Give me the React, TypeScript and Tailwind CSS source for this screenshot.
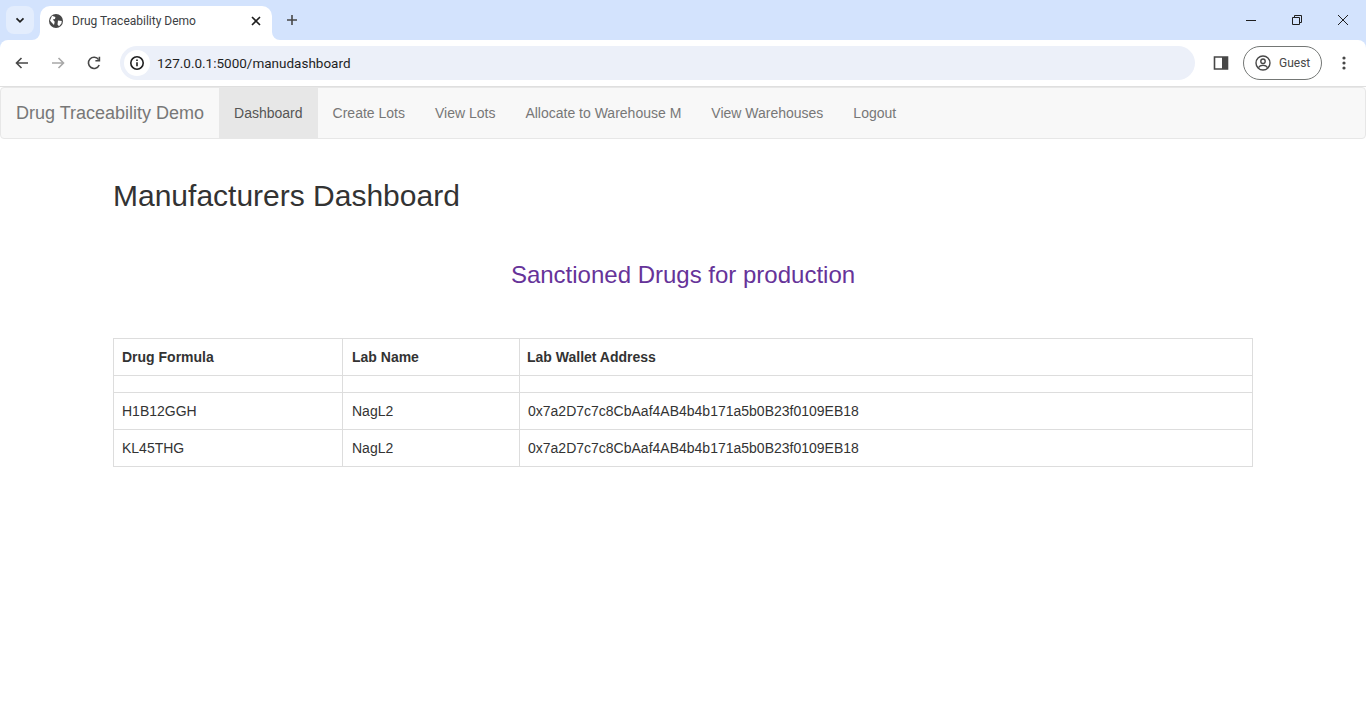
const font = { sans: "font-['Liberation_Sans',Arial,sans-serif]" };

const navLinks = ["Create Lots", "View Lots", "Allocate to Warehouse M", "View Warehouses", "Logout"];

const rows = [
  { formula: "H1B12GGH", lab: "NagL2", wallet: "0x7a2D7c7c8CbAaf4AB4b4b171a5b0B23f0109EB18" },
  { formula: "KL45THG", lab: "NagL2", wallet: "0x7a2D7c7c8CbAaf4AB4b4b171a5b0B23f0109EB18" },
];

const BrowserChrome = () => (
  <div className="bg-[#d3e3fd] font-['Roboto','Noto_Sans',sans-serif]">
    <div className="flex h-10 items-end">
      <div className="mb-[6px] ml-[6px] flex h-[28px] w-[28px] items-center justify-center rounded-lg bg-[#e3edfd]">
        <svg width="12" height="12" viewBox="0 0 12 12" fill="none" stroke="#1f1f1f" strokeWidth="1.7">
          <path d="M2.5 4.3 6 7.8l3.5-3.5" />
        </svg>
      </div>
      <div className="relative ml-[6px] flex h-[34px] w-[232px] items-center rounded-t-[10px] bg-white pb-[5px]">
        {/* flares where the tab meets the toolbar */}
        <svg className="absolute bottom-0 left-[-8px]" width="8" height="8" viewBox="0 0 8 8" fill="#fff">
          <path d="M8 0A8 8 0 0 1 0 8h8z" />
        </svg>
        <svg className="absolute bottom-0 right-[-8px]" width="8" height="8" viewBox="0 0 8 8" fill="#fff">
          <path d="M0 0a8 8 0 0 0 8 8H0z" />
        </svg>
        <svg className="ml-[9px]" width="14" height="14" viewBox="0 0 14 14">
          <circle cx="7" cy="7" r="7" fill="#474747" />
          <path d="M3 1.8 6.4 3 6 5 3.8 5.6 5.7 7.8 5 11 2.6 8.6 1 6.5zM9 6.5l3.8.5-.4 2.6L10 12.2 8.5 10.4z" fill="#fff" />
        </svg>
        <span className="ml-[9px] text-xs text-[#3c4043]">Drug Traceability Demo</span>
        <svg className="ml-[55px]" width="10" height="10" viewBox="0 0 10 10" stroke="#1f1f1f" strokeWidth="1.6">
          <path d="M1 1l8 8M9 1l-8 8" />
        </svg>
      </div>
      <svg className="mb-[14px] ml-[14px]" width="12" height="12" viewBox="0 0 12 12" stroke="#474747" strokeWidth="1.6">
        <path d="M6 1v10M1 6h10" />
      </svg>
      <div className="mb-[14px] ml-auto flex items-center">
        <svg width="12" height="12" viewBox="0 0 12 12" stroke="#1f1f1f">
          <path d="M1 6.5h10" />
        </svg>
        <svg className="ml-[34px]" width="12" height="12" viewBox="0 0 12 12" fill="none" stroke="#1f1f1f">
          <path d="M1.5 3.5h7v7h-7zM3.5 3.5v-2h7v7h-2" />
        </svg>
        <svg className="ml-[34px] mr-[17px]" width="12" height="12" viewBox="0 0 12 12" stroke="#1f1f1f">
          <path d="M1 1l10 10M11 1 1 11" />
        </svg>
      </div>
    </div>
    <div className="flex h-[47px] items-center rounded-t-lg border-b border-[#dfdfdf] bg-white">
      <svg className="ml-[14px]" width="16" height="16" viewBox="0 0 16 16" fill="none" stroke="#474747" strokeWidth="1.6">
        <path d="M14 8H2.5M7.5 3 2.5 8l5 5" />
      </svg>
      <svg className="ml-[20px]" width="16" height="16" viewBox="0 0 16 16" fill="none" stroke="#a8a8a8" strokeWidth="1.6">
        <path d="M2 8h11.5M8.5 3l5 5-5 5" />
      </svg>
      <svg className="ml-[20px]" width="16" height="16" viewBox="0 0 16 16" fill="none" stroke="#474747" strokeWidth="1.6">
        <path d="M13.2 10A5.6 5.6 0 1 1 12.6 4.6" />
        <path d="M13.4 1.8v4h-4" />
      </svg>
      <div className="ml-[18px] flex h-[34px] w-[1075px] items-center rounded-full bg-[#ecf0f9]">
        <div className="ml-[4px] flex h-[26px] w-[26px] items-center justify-center rounded-full bg-white">
          <svg width="16" height="16" viewBox="0 0 16 16" fill="none" stroke="#1f1f1f" strokeWidth="1.6">
            <circle cx="8" cy="8" r="6.2" />
            <path d="M8 7.2v4M8 4.4V6" />
          </svg>
        </div>
        <span className="ml-[7px] pt-[1px] text-[13.5px] text-[#1f1f1f]">127.0.0.1:5000/manudashboard</span>
      </div>
      <svg className="ml-[18px]" width="16" height="16" viewBox="0 0 16 16">
        <path d="M1.5 2h13v12h-13z" fill="none" stroke="#474747" strokeWidth="1.6" />
        <path d="M9 2h6v12H9z" fill="#474747" />
      </svg>
      <div className="ml-[14px] flex h-[34px] w-[79px] items-center rounded-full border border-[#747775]">
        <svg className="ml-[11px]" width="16" height="16" viewBox="0 0 16 16" fill="none" stroke="#474747" strokeWidth="1.4">
          <circle cx="8" cy="8" r="7" />
          <circle cx="8" cy="6.2" r="2.2" />
          <path d="M3.4 12.6c1-1.7 2.6-2.3 4.6-2.3s3.6.6 4.6 2.3" />
        </svg>
        <span className="ml-[8px] text-xs text-[#474747]">Guest</span>
      </div>
      <svg className="ml-[20px]" width="4" height="16" viewBox="0 0 4 16" fill="#474747">
        <circle cx="2" cy="3" r="1.6" />
        <circle cx="2" cy="8" r="1.6" />
        <circle cx="2" cy="13" r="1.6" />
      </svg>
    </div>
  </div>
);

const Navbar = () => (
  <nav className="flex h-[52px] items-stretch rounded border border-[#e7e7e7] bg-[#f8f8f8]">
    <a className="flex items-center px-[15px] text-lg text-[#777]">Drug Traceability Demo</a>
    <a className="flex items-center bg-[#e7e7e7] px-[15px] text-sm text-[#555]">Dashboard</a>
    {navLinks.map((link) => (
      <a key={link} className="flex items-center px-[15px] text-sm text-[#777]">
        {link}
      </a>
    ))}
  </nav>
);

const App = () => {
  return (
    <div className={`min-h-[728px] bg-white ${font.sans} text-sm text-[#333]`}>
      <BrowserChrome />
      <Navbar />
      <div className="mx-auto w-[1140px] pt-[40px]">
        <h2 className="text-[30px] leading-[33px]">Manufacturers Dashboard</h2>
        <h3 className="mt-[50px] text-center text-2xl leading-[26px] text-[#663399]">Sanctioned Drugs for production</h3>
        <table className="mt-[50px] w-[1140px] table-fixed border-collapse">
          <colgroup>
            <col className="w-[229px]" />
            <col className="w-[177px]" />
            <col />
          </colgroup>
          <thead>
            <tr>
              <th className="h-[37px] border border-[#ddd] px-2 text-left font-bold">Drug Formula</th>
              <th className="h-[37px] border border-[#ddd] pl-[9px] pr-2 text-left font-bold">Lab Name</th>
              <th className="h-[37px] border border-[#ddd] pl-[7px] pr-2 text-left font-bold">Lab Wallet Address</th>
            </tr>
          </thead>
          <tbody>
            <tr>
              <td className="h-[17px] border border-[#ddd]" />
              <td className="h-[17px] border border-[#ddd]" />
              <td className="h-[17px] border border-[#ddd]" />
            </tr>
            {rows.map((row) => (
              <tr key={row.formula}>
                <td className="h-[37px] border border-[#ddd] px-2">{row.formula}</td>
                <td className="h-[37px] border border-[#ddd] pl-[9px] pr-2">{row.lab}</td>
                <td className="h-[37px] border border-[#ddd] px-2">{row.wallet}</td>
              </tr>
            ))}
          </tbody>
        </table>
      </div>
    </div>
  );
};

export default App;
